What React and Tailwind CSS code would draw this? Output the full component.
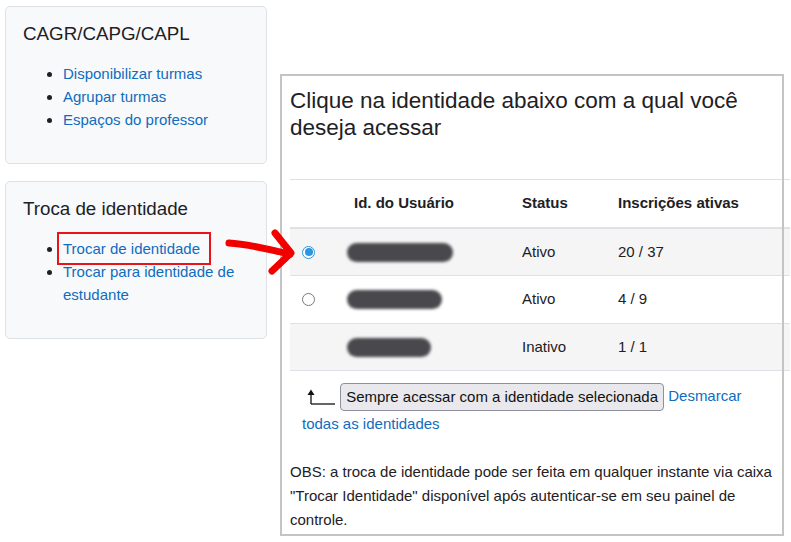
import React from "react";

const FONT = { fontFamily: '"Liberation Sans", Arial, sans-serif' };

function SidePanel({ title, children }) {
  return (
    <div className="w-[262px] rounded-[5px] border border-[#dee2e6] bg-[#f8f9fa] px-[17px] pt-[15px] pb-[32px]">
      <h5 className="text-[18.75px] leading-[23px] text-[#1d2125] mb-[17px]">{title}</h5>
      <ul className="list-disc pl-[40px] text-[15px] leading-[23px] text-[#1d2125]">{children}</ul>
    </div>
  );
}

function Radio({ checked }) {
  if (checked) {
    return (
      <span className="flex h-[13px] w-[13px] items-center justify-center rounded-full border border-[#2b95e0] bg-white">
        <span className="h-[8px] w-[8px] rounded-full bg-[#2b95e0]" />
      </span>
    );
  }
  return <span className="block h-[13px] w-[13px] rounded-full border border-[#7a7a7a] bg-white" />;
}

function Blob({ width }) {
  return (
    <div className="flex items-center">
      <div className="h-[19px] rounded-full bg-[#48484d] blur-[1.5px]" style={{ width }} />
    </div>
  );
}

const rows = [
  { sel: "checked", blob: 106, status: "Ativo", count: "20 / 37", cls: "h-[47px] bg-[#f5f5f5]" },
  { sel: "unchecked", blob: 95, status: "Ativo", count: "4 / 9", cls: "h-[48px] bg-white" },
  { sel: null, blob: 84, status: "Inativo", count: "1 / 1", cls: "h-[47px] bg-[#f5f5f5]" },
];

export default function App() {
  return (
    <div className="relative min-h-[542px] bg-white text-[#1d2125]" style={FONT}>
      <div className="flex gap-[13px] pl-[5px] pt-[6px]">
        {/* Left column */}
        <div className="flex flex-col gap-[17px]">
          <SidePanel title="CAGR/CAPG/CAPL">
            <li><a className="text-[#0f6cbf]">Disponibilizar turmas</a></li>
            <li><a className="text-[#0f6cbf]">Agrupar turmas</a></li>
            <li><a className="text-[#0f6cbf]">Espaços do professor</a></li>
          </SidePanel>
          <SidePanel title="Troca de identidade">
            <li>
              <span className="relative inline-block">
                <a className="text-[#0f6cbf]">Trocar de identidade</a>
                <span className="absolute -left-[6px] -right-[11px] -top-[5px] -bottom-[5px] border-2 border-[#e8141a]" />
              </span>
            </li>
            <li><a className="text-[#0f6cbf]">Trocar para identidade de estudante</a></li>
          </SidePanel>
        </div>

        {/* Identity selection panel */}
        <div className="relative mt-[68px] w-[504px] pl-[10px] pt-[13px] pb-[4px]">
          <h4 className="text-[22.5px] leading-[27px] text-[#1d2125] pr-[8px]">
            Clique na identidade abaixo com a qual você deseja acessar
          </h4>

          <div className="mt-[38px] w-[500px] text-[15px]">
            <div className="flex h-[50px] items-center border-t border-b-2 border-[#dee2e6] font-bold">
              <div className="w-[52px]" />
              <div className="w-[168px] px-[12px]">Id. do Usuário</div>
              <div className="w-[96px] px-[12px]">Status</div>
              <div className="px-[12px]">Inscrições ativas</div>
            </div>
            {rows.map((r, i) => (
              <div key={i} className={`flex items-center border-b border-[#dee2e6] ${r.cls}`}>
                <div className="w-[52px] px-[12px]">
                  {r.sel && <Radio checked={r.sel === "checked"} />}
                </div>
                <div className="w-[168px] pl-[5px]">
                  <Blob width={r.blob} />
                </div>
                <div className="w-[96px] px-[12px]">{r.status}</div>
                <div className="px-[12px]">{r.count}</div>
              </div>
            ))}
          </div>

          <div className="mt-[12px] pl-[12px] pr-[40px] text-[15px] leading-[26px]">
            <svg width="34" height="18" viewBox="0 0 34 18" className="inline-block align-middle">
              <path d="M9 16 V5" stroke="#111" strokeWidth="1.3" fill="none" />
              <path d="M9 1.5 L5.5 7 L12.5 7 Z" fill="#111" />
              <path d="M9 16 H33" stroke="#111" strokeWidth="1.3" fill="none" />
            </svg>{" "}
            <button className="inline-block h-[28px] rounded-[4px] border border-[#8f8f9d] bg-[#e9e9ed] px-[5px] align-middle text-[15px] leading-[24px] text-[#111]">
              Sempre acessar com a identidade selecionada
            </button>{" "}
            <a className="text-[#0f6cbf]">Desmarcar todas as identidades</a>
          </div>

          <p className="mt-[23px] pr-[8px] text-[15px] leading-[24px] text-[#1d2125]">
            OBS: a troca de identidade pode ser feita em qualquer instante via caixa "Trocar Identidade" disponível após autenticar-se em seu painel de controle.
          </p>

          <div className="pointer-events-none absolute inset-0 border-2 border-[#c4c4c4]" />
        </div>
      </div>

      {/* annotation arrow */}
      <svg className="pointer-events-none absolute left-[220px] top-[222px]" width="85" height="60" viewBox="0 0 85 60">
        <path d="M9 21 C30 22 50 28 70 32" stroke="#f20000" strokeWidth="7" strokeLinecap="round" fill="none" />
        <path d="M55 11 L71 31 L52 49" stroke="#f20000" strokeWidth="7" strokeLinecap="round" strokeLinejoin="round" fill="none" />
      </svg>
    </div>
  );
}
